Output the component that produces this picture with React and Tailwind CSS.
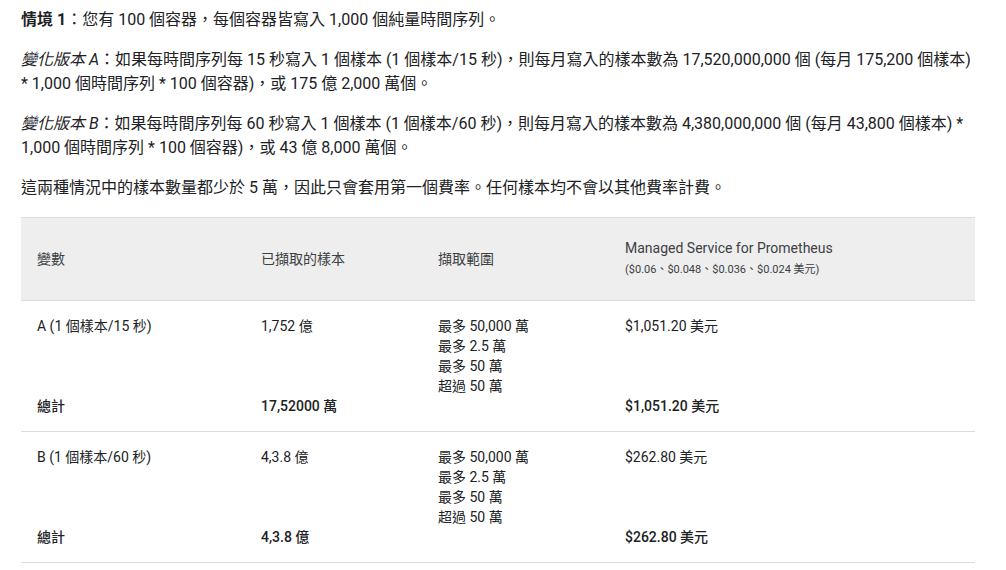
import React from "react";

const FONT = { fontFamily: 'Roboto, "Noto Sans CJK TC", sans-serif' };

function Row({ label, samples, ranges, cost, totalSamples, totalCost }) {
  return (
    <div className="grid grid-cols-[224px_177px_187px_1fr] border-b border-[#dadce0] py-[15px] text-[14px] leading-5 text-[#202124]">
      <div className="pl-4">{label}</div>
      <div className="pl-4">{samples}</div>
      <div className="pl-4">
        {ranges.map((r) => (
          <div key={r}>{r}</div>
        ))}
      </div>
      <div className="pl-4">{cost}</div>
      <div className="pl-4 font-medium">總計</div>
      <div className="pl-4 font-medium">{totalSamples}</div>
      <div className="pl-4"></div>
      <div className="pl-4 font-medium">{totalCost}</div>
    </div>
  );
}

export default function App() {
  const ranges = ["最多 50,000 萬", "最多 2.5 萬", "最多 50 萬", "超過 50 萬"];
  return (
    <div className="w-[1006px] h-[570px] overflow-hidden bg-white px-[21px] pt-2 text-[#202124]" style={FONT}>
      <div className="w-[954px] text-[16px] leading-6">
        <p>
          <span className="font-bold">情境 1</span>：您有 100 個容器，每個容器皆寫入 1,000 個純量時間序列。
        </p>
        <p className="mt-4">
          <em>變化版本 A</em>：如果每時間序列每 15 秒寫入 1 個樣本 (1 個樣本/15 秒)，則每月寫入的樣本數為 17,520,000,000 個 (每月 175,200 個樣本) * 1,000 個時間序列 * 100 個容器)，或 175 億 2,000 萬個。
        </p>
        <p className="mt-4">
          <em>變化版本 B</em>：如果每時間序列每 60 秒寫入 1 個樣本 (1 個樣本/60 秒)，則每月寫入的樣本數為 4,380,000,000 個 (每月 43,800 個樣本) * 1,000 個時間序列 * 100 個容器)，或 43 億 8,000 萬個。
        </p>
        <p className="mt-4">
          這兩種情況中的樣本數量都少於 5 萬，因此只會套用第一個費率。任何樣本均不會以其他費率計費。
        </p>
      </div>

      <div className="mt-[17px] w-[954px]">
        <div className="grid grid-cols-[224px_177px_187px_1fr] items-center border-y border-[#dadce0] bg-[#eeeeee] h-[84px] text-[14px] leading-5 text-[#3c4043]">
          <div className="pl-4">變數</div>
          <div className="pl-4">已擷取的樣本</div>
          <div className="pl-4">擷取範圍</div>
          <div className="pl-4">
            <div>Managed Service for Prometheus</div>
            <div className="mt-[2px] text-[11px] leading-5">($0.06、$0.048、$0.036、$0.024 美元)</div>
          </div>
        </div>
        <Row
          label="A (1 個樣本/15 秒)"
          samples="1,752 億"
          ranges={ranges}
          cost="$1,051.20 美元"
          totalSamples="17,52000 萬"
          totalCost="$1,051.20 美元"
        />
        <Row
          label="B (1 個樣本/60 秒)"
          samples="4,3.8 億"
          ranges={ranges}
          cost="$262.80 美元"
          totalSamples="4,3.8 億"
          totalCost="$262.80 美元"
        />
      </div>
    </div>
  );
}
